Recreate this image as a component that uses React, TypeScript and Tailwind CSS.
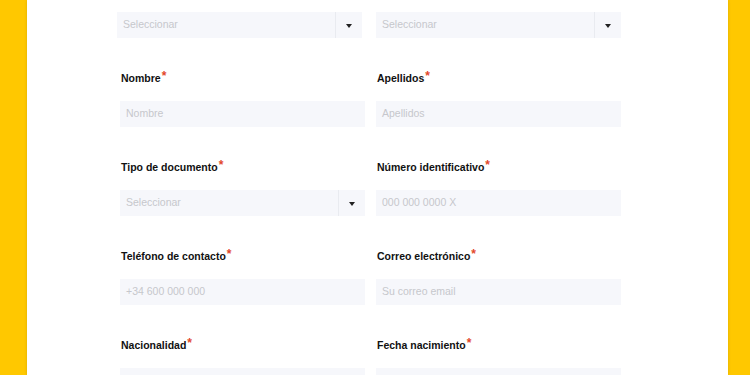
type Field = {
  label?: string;
  placeholder: string;
  select?: boolean;
  shift?: boolean;
};

const rows: Field[][] = [
  [
    { placeholder: "Seleccionar", select: true, shift: true },
    { placeholder: "Seleccionar", select: true },
  ],
  [
    { label: "Nombre", placeholder: "Nombre" },
    { label: "Apellidos", placeholder: "Apellidos" },
  ],
  [
    { label: "Tipo de documento", placeholder: "Seleccionar", select: true },
    { label: "Número identificativo", placeholder: "000 000 0000 X" },
  ],
  [
    { label: "Teléfono de contacto", placeholder: "+34 600 000 000" },
    { label: "Correo electrónico", placeholder: "Su correo email" },
  ],
  [
    { label: "Nacionalidad", placeholder: "" },
    { label: "Fecha nacimiento", placeholder: "" },
  ],
];

function FormField({ field }: { field: Field }) {
  return (
    <div className={field.shift ? "-ml-[3px] mr-[3px] flex flex-col" : "flex flex-col"}>
      {field.label && (
        <div className="mb-4 h-[14px] pl-[1px] text-[10.5px] font-bold leading-[14px] text-[#111]">
          {field.label}
          <span className="relative -top-[2px] ml-[1px] text-[12px] font-bold text-[#e2472a]">*</span>
        </div>
      )}
      <div className="flex h-[26px] items-center bg-[#f6f7fb]">
        <span className="flex-1 pl-[6px] text-[10.5px] text-[#c6c7cc]">{field.placeholder}</span>
        {field.select && (
          <span className="flex h-full w-[27px] items-center justify-center border-l border-[#e9ebf0]">
            <span className="mt-[1px] h-0 w-0 border-x-[3px] border-t-[4px] border-x-transparent border-t-[#222]" />
          </span>
        )}
      </div>
    </div>
  );
}

export default function App() {
  return (
    <div
      className="flex h-[375px] w-[750px] overflow-hidden bg-[#ffc800]"
      style={{ fontFamily: '"Liberation Sans", Arial, sans-serif' }}
    >
      <div className="ml-[27px] h-full w-[701px] bg-white shadow-[0_0_3px_rgba(0,0,0,0.15)]">
        <div className="flex flex-col gap-[33px] pl-[93px] pt-3">
          {rows.map((row, i) => (
            <div key={i} className="grid grid-cols-[245px_245px] gap-x-[11px]">
              {row.map((f, j) => (
                <FormField key={j} field={f} />
              ))}
            </div>
          ))}
        </div>
      </div>
    </div>
  );
}
